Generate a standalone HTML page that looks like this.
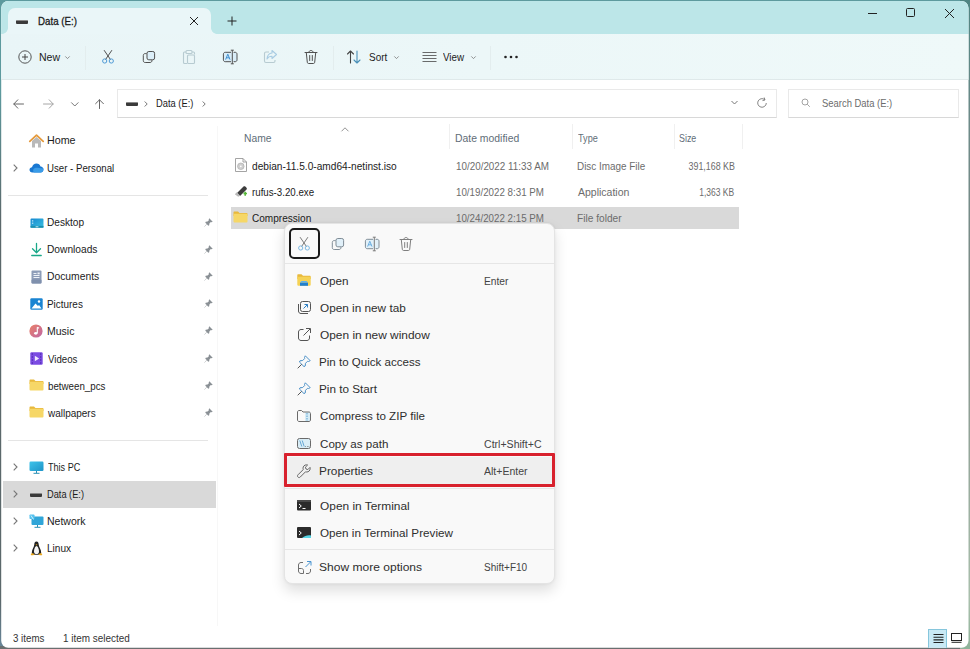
<!DOCTYPE html>
<html><head><meta charset="utf-8"><title>Data (E:)</title>
<style>
*{box-sizing:border-box;margin:0;padding:0}
html,body{width:970px;height:649px;overflow:hidden}
body{background:linear-gradient(180deg,#4f8583 0,#6d8a88 120px,#7f8c87 300px,#a9bfac 600px,#8fb39a 649px) right top/10px 100% no-repeat,linear-gradient(0deg,#6a6f70 0,#6a6f70 3px,transparent 3px) left bottom/100% 10px no-repeat,linear-gradient(180deg,#5d9a9e 0,#5d9a9e 90px,#5b686b 220px,#5b686b 600px,#68879b 649px)}
body{font-family:"Liberation Sans",sans-serif;font-size:10.5px;color:#1b1b1b;position:relative}
.a{position:absolute}
.t{position:absolute;white-space:nowrap;line-height:16px;height:16px}
svg{position:absolute;overflow:visible}
#win{left:0;top:0;width:970px;height:649px;background:#fff;overflow:hidden;clip-path:inset(1px 1.500px 1.300px 1.200px round 7px)}
#title{left:0;top:0;width:970px;height:34px;background:#bce6e8}
#tab{left:8px;top:8px;width:203px;height:26px;background:#eaf6f8;border-radius:7px 7px 0 0}
#tool{left:0;top:34px;width:970px;height:46px;background:linear-gradient(90deg,#e9f5f7,#eff9f9);border-bottom:1px solid #dfe9ea}
.vs{position:absolute;width:1px;background:#e3edee;top:46px;height:24px}
#addr{left:117px;top:89px;width:660px;height:29px;border:1px solid #e9e9e9;border-bottom-color:#d8d8d8;background:#fff}
#srch{left:788px;top:89px;width:171px;height:29px;border:1px solid #e9e9e9;border-bottom-color:#d8d8d8;background:#fff}
.nav .t{left:47px;margin-top:0.4px}
.hs{position:absolute;height:1px;background:#e5e5e5}
.g{color:#6c6c6c}
.m .t{font-size:11.5px;left:320px;color:#2e2e2e;margin-top:0.7px}
.m .k{left:484px!important;font-size:10px!important;color:#444!important}
</style></head><body>
<div id="win" class="a">
<div id="title" class="a"></div>
<div id="tab" class="a"></div>
<div id="tool" class="a"></div>
<div class="a" style="left:2px;top:28px;width:6px;height:6px;background:radial-gradient(circle at 0 0,rgba(234,246,248,0) 5.500px,#eaf6f8 6.200px)"></div>
<div class="a" style="left:211px;top:28px;width:6px;height:6px;background:radial-gradient(circle at 100% 0,rgba(234,246,248,0) 5.500px,#eaf6f8 6.200px)"></div>
<!-- frame border -->

<!-- tab contents -->
<div class="a" style="left:16px;top:20px;width:12px;height:4px;background:#3a3a3a;border-radius:1px;border-top:1px solid #8a8a8a"></div>
<div class="t" style="left:38.0px;top:13px;font-size:11px;-webkit-text-stroke:0.300px #1b1b1b;transform:scaleX(0.884);transform-origin:0 0">Data (E:)</div>
<svg style="left:189px;top:16px" width="10" height="10" viewBox="0 0 10 10"><path d="M1 1L9 9M9 1L1 9" stroke="#222" stroke-width="1" fill="none"/></svg>
<svg style="left:227px;top:16px" width="10" height="10" viewBox="0 0 10 10"><path d="M5 0.5V9.5M0.5 5H9.5" stroke="#222" stroke-width="1" fill="none"/></svg>
<!-- window controls -->
<svg style="left:867px;top:8px" width="100" height="12" viewBox="0 0 100 12"><path d="M1 5.5H10" stroke="#222" stroke-width="1" fill="none"/><rect x="39.500" y="0.500" width="8" height="8" rx="1" stroke="#222" fill="none"/><path d="M78 1L87 10M87 1L78 10" stroke="#222" stroke-width="1" fill="none"/></svg>

<!-- toolbar -->
<div class="vs" style="left:85px"></div><div class="vs" style="left:333px"></div><div class="vs" style="left:490px"></div>
<svg style="left:17px;top:49px" width="16" height="16" viewBox="0 0 16 16"><circle cx="8" cy="8" r="6.200" stroke="#444" stroke-width="0.900" fill="none"/><path d="M8 5V11M5 8H11" stroke="#444" stroke-width="1" fill="none"/></svg>
<div class="t" style="left:38.5px;top:49px;transform:scaleX(1.002);transform-origin:0 0">New</div>
<svg style="left:65px;top:55.500px" width="5" height="3" viewBox="0 0 5 3"><path d="M0.300 0.400L2.500 2.600L4.700 0.400" stroke="#777" stroke-width="0.800" fill="none"/></svg>
<!-- cut -->
<svg style="left:100px;top:49px" width="16" height="16" viewBox="0 0 16 16"><path d="M4.300 1.500L10.300 10.300M11.700 1.500L5.700 10.300" stroke="#505050" stroke-width="1" fill="none" stroke-linecap="round"/><circle cx="4.700" cy="12" r="2.100" stroke="#4f9ad6" stroke-width="1" fill="none"/><circle cx="11.300" cy="12" r="2.100" stroke="#4f9ad6" stroke-width="1" fill="none"/></svg>
<!-- copy -->
<svg style="left:140px;top:49px" width="16" height="16" viewBox="0 0 16 16"><path d="M6.700 4.600H5.200C4 4.600 3.300 5.300 3.300 6.500V11.600C3.300 12.800 4 13.500 5.200 13.500H10C11.200 13.500 11.900 12.800 11.900 11.600V11" stroke="#505050" stroke-width="1" fill="none"/><rect x="7" y="2.500" width="7.600" height="8.300" rx="1.800" stroke="#505050" stroke-width="1" fill="#dceff9"/></svg>
<!-- paste (disabled) -->
<svg style="left:181px;top:49px" width="16" height="16" viewBox="0 0 16 16" opacity="0.450"><path d="M5 3H3.500C2.900 3 2.500 3.400 2.500 4V13.500C2.500 14.100 2.900 14.500 3.500 14.500H6M11 3H12.500C13.100 3 13.500 3.400 13.500 4V5.500" stroke="#7a98a4" stroke-width="1.100" fill="none"/><rect x="5" y="1.500" width="6" height="3" rx="1" stroke="#7a98a4" stroke-width="1.100" fill="none"/><rect x="6.500" y="6" width="7" height="8.500" rx="1" stroke="#7a98a4" stroke-width="1.100" fill="none"/></svg>
<!-- rename -->
<svg style="left:220px;top:49px" width="18" height="16" viewBox="0 0 18 16"><rect x="3.400" y="3.300" width="13.600" height="9.400" rx="1.800" fill="#d9edf8"/><path d="M11 3.300H5.200C4.200 3.300 3.400 4.100 3.400 5.100V10.900C3.400 11.900 4.200 12.700 5.200 12.700H11M13.600 3.300H15.200C16.200 3.300 17 4.100 17 5.100V10.900C17 11.900 16.200 12.700 15.200 12.700H13.600" stroke="#505050" stroke-width="1" fill="none"/><path d="M10.800 1.200H13.800M12.300 1.200V14.800M10.800 14.800H13.800" stroke="#505050" stroke-width="1" fill="none"/><path d="M5.600 10.600L7.800 5.200L10 10.600M6.400 8.800H9.200" stroke="#3f8fd0" stroke-width="1" fill="none"/></svg>
<!-- share (disabled) -->
<svg style="left:262px;top:49px" width="16" height="16" viewBox="0 0 16 16" opacity="0.450"><path d="M7 3H4C3 3 2.500 3.600 2.500 4.500V12C2.500 13 3 13.500 4 13.500H11.500C12.500 13.500 13 13 13 12V11" stroke="#7a98a4" stroke-width="1.100" fill="none"/><path d="M10 1.500L14.500 5.500L10 9.500V7.200C7.500 7.200 6 8 5 10C5.300 6.500 7 4.300 10 4V1.500Z" stroke="#5a9acb" stroke-width="1.100" fill="none" stroke-linejoin="round"/></svg>
<!-- delete -->
<svg style="left:303px;top:49px" width="16" height="16" viewBox="0 0 16 16"><path d="M2 3.500H14M5.800 3.300C5.800 0.800 10.200 0.800 10.200 3.300M3.300 3.700L4.300 13.300C4.400 14.100 4.900 14.500 5.600 14.500H10.400C11.100 14.500 11.600 14.100 11.700 13.300L12.700 3.700M6.700 6.500V11.500M9.300 6.500V11.500" stroke="#505050" stroke-width="1" fill="none" stroke-linecap="round"/></svg>
<!-- sort -->
<svg style="left:346px;top:49px" width="16" height="16" viewBox="0 0 16 16"><path d="M4.500 14V2M1.500 5L4.500 2L7.500 5" stroke="#444" stroke-width="1.100" fill="none" stroke-linecap="round" stroke-linejoin="round"/><path d="M11 2V14M8 11L11 14L14 11" stroke="#4a90b8" stroke-width="1.100" fill="none" stroke-linecap="round" stroke-linejoin="round"/></svg>
<div class="t" style="left:368.5px;top:49px;transform:scaleX(0.948);transform-origin:0 0">Sort</div>
<svg style="left:394px;top:55.500px" width="5" height="3" viewBox="0 0 5 3"><path d="M0.300 0.400L2.500 2.600L4.700 0.400" stroke="#777" stroke-width="0.800" fill="none"/></svg>
<!-- view -->
<svg style="left:422px;top:51px" width="15" height="12" viewBox="0 0 15 12"><path d="M0.500 1.500H14.500M0.500 4.500H14.500M0.500 7.500H14.500M0.500 10.500H14.500" stroke="#5a5a5a" stroke-width="0.900" fill="none"/></svg>
<div class="t" style="left:443.0px;top:49px;transform:scaleX(0.935);transform-origin:0 0">View</div>
<svg style="left:471px;top:55.500px" width="5" height="3" viewBox="0 0 5 3"><path d="M0.300 0.400L2.500 2.600L4.700 0.400" stroke="#777" stroke-width="0.800" fill="none"/></svg>
<!-- more -->
<svg style="left:503px;top:55px" width="16" height="4" viewBox="0 0 16 4"><circle cx="2.500" cy="2" r="1.300" fill="#222"/><circle cx="8" cy="2" r="1.300" fill="#222"/><circle cx="13.500" cy="2" r="1.300" fill="#222"/></svg>

<!-- address row -->
<svg style="left:13px;top:99px" width="11" height="10" viewBox="0 0 11 10"><path d="M10.500 5H0.800M4.800 0.800L0.800 5L4.800 9.200" stroke="#666" stroke-width="1" fill="none" stroke-linecap="round" stroke-linejoin="round"/></svg>
<svg style="left:42.500px;top:99px" width="11" height="10" viewBox="0 0 11 10"><path d="M0.500 5H10.200M6.200 0.800L10.200 5L6.200 9.200" stroke="#a6a6a6" stroke-width="1" fill="none" stroke-linecap="round" stroke-linejoin="round"/></svg>
<svg style="left:70.500px;top:101.500px" width="8" height="5" viewBox="0 0 8 5"><path d="M0.500 0.700L3.800 4L7.100 0.700" stroke="#777" stroke-width="1" fill="none" stroke-linecap="round" stroke-linejoin="round"/></svg>
<svg style="left:94.500px;top:99px" width="9" height="10" viewBox="0 0 9 10"><path d="M4.500 9.500V0.800M0.600 4.700L4.500 0.800L8.400 4.700" stroke="#666" stroke-width="1" fill="none" stroke-linecap="round" stroke-linejoin="round"/></svg>
<div id="addr" class="a"></div>
<div class="a" style="left:126px;top:102px;width:12px;height:4px;background:#3a3a3a;border-radius:1px;border-top:1px solid #8a8a8a"></div>
<svg style="left:144px;top:101px" width="4" height="6" viewBox="0 0 4 6"><path d="M0.700 0.500L3.200 3L0.700 5.500" stroke="#666" stroke-width="0.900" fill="none"/></svg>
<div class="t" style="left:155.5px;top:95px;transform:scaleX(0.889);transform-origin:0 0">Data (E:)</div>
<svg style="left:201.500px;top:101px" width="4" height="6" viewBox="0 0 4 6"><path d="M0.700 0.500L3.200 3L0.700 5.500" stroke="#666" stroke-width="0.900" fill="none"/></svg>
<svg style="left:731px;top:100px" width="8" height="6" viewBox="0 0 8 6"><path d="M0.500 1L3.500 4L6.500 1" stroke="#777" stroke-width="1" fill="none"/></svg>
<svg style="left:756px;top:97px" width="12" height="12" viewBox="0 0 12 12"><path d="M10.300 6A4.300 4.300 0 1 1 8.700 2.600" stroke="#777" stroke-width="0.900" fill="none"/><path d="M8.200 0.500L9 3L6.500 3.600" stroke="#777" stroke-width="0.900" fill="none"/></svg>
<div id="srch" class="a"></div>
<svg style="left:801px;top:98px" width="10" height="10" viewBox="0 0 10 10"><circle cx="4" cy="4" r="3" stroke="#9a9a9a" stroke-width="0.900" fill="none"/><path d="M6.200 6.200L8.800 8.800" stroke="#9a9a9a" stroke-width="0.900" fill="none"/></svg>
<div class="t g" style="left:822.0px;top:95px;transform:scaleX(0.898);transform-origin:0 0">Search Data (E:)</div>
<!-- nav pane -->
<div class="nav">
<div class="a" style="left:3px;top:481px;width:212.500px;height:27px;background:#d9d9d9"></div>
<div class="a" style="left:217px;top:126px;width:1px;height:500px;background:#f7f7f7"></div>
<div class="hs" style="left:8px;top:195px;width:200px"></div><div class="hs" style="left:8px;top:440px;width:200px"></div>
<div class="t" style="top:132px;left:47.0px;transform:scaleX(1.019);transform-origin:0 0">Home</div>
<div class="t" style="top:160px;left:47.0px;transform:scaleX(0.921);transform-origin:0 0">User - Personal</div>
<div class="t" style="top:214px;left:47.1px;transform:scaleX(0.962);transform-origin:0 0">Desktop</div>
<div class="t" style="top:241px;left:46.5px;transform:scaleX(0.971);transform-origin:0 0">Downloads</div>
<div class="t" style="top:268px;left:46.5px;transform:scaleX(0.982);transform-origin:0 0">Documents</div>
<div class="t" style="top:295.7px;left:46.5px;transform:scaleX(0.945);transform-origin:0 0">Pictures</div>
<div class="t" style="top:322.6px;left:46.5px;transform:scaleX(1.001);transform-origin:0 0">Music</div>
<div class="t" style="top:350.5px;left:47.5px;transform:scaleX(0.921);transform-origin:0 0">Videos</div>
<div class="t" style="top:377.4px;left:47.5px;transform:scaleX(0.928);transform-origin:0 0">between_pcs</div>
<div class="t" style="top:404.5px;left:47.5px;transform:scaleX(0.950);transform-origin:0 0">wallpapers</div>
<div class="t" style="top:459px;left:48.0px;transform:scaleX(0.865);transform-origin:0 0">This PC</div>
<div class="t" style="top:486px;left:47.0px;transform:scaleX(0.880);transform-origin:0 0">Data (E:)</div>
<div class="t" style="top:513px;left:47.0px;transform:scaleX(1.001);transform-origin:0 0">Network</div>
<div class="t" style="top:540px;left:47.0px;transform:scaleX(0.958);transform-origin:0 0">Linux</div>
<svg style="left:13px;top:164px" width="5" height="8" viewBox="0 0 5 8"><path d="M0.700 0.700L4 4L0.700 7.300" stroke="#777" stroke-width="1.100" fill="none"/></svg>
<svg style="left:13px;top:463px" width="5" height="8" viewBox="0 0 5 8"><path d="M0.700 0.700L4 4L0.700 7.300" stroke="#777" stroke-width="1.100" fill="none"/></svg>
<svg style="left:13px;top:490px" width="5" height="8" viewBox="0 0 5 8"><path d="M0.700 0.700L4 4L0.700 7.300" stroke="#777" stroke-width="1.100" fill="none"/></svg>
<svg style="left:13px;top:517px" width="5" height="8" viewBox="0 0 5 8"><path d="M0.700 0.700L4 4L0.700 7.300" stroke="#777" stroke-width="1.100" fill="none"/></svg>
<svg style="left:13px;top:544px" width="5" height="8" viewBox="0 0 5 8"><path d="M0.700 0.700L4 4L0.700 7.300" stroke="#777" stroke-width="1.100" fill="none"/></svg>
<svg style="left:204px;top:218px" width="9" height="9" viewBox="0 0 9 9"><path d="M5.300 0.300L8.700 3.700L7.600 4.300L6.800 4.100L5.400 5.500L5.200 7.300L4.300 7.700L2.900 6.300L0.500 8.700L0.300 8.500L2.700 6.100L1.300 4.700L1.700 3.800L3.500 3.600L4.900 2.200L4.700 1.400Z" fill="#8a9095"/></svg>
<svg style="left:204px;top:245px" width="9" height="9" viewBox="0 0 9 9"><path d="M5.300 0.300L8.700 3.700L7.600 4.300L6.800 4.100L5.400 5.500L5.200 7.300L4.300 7.700L2.900 6.300L0.500 8.700L0.300 8.500L2.700 6.100L1.300 4.700L1.700 3.800L3.500 3.600L4.900 2.200L4.700 1.400Z" fill="#8a9095"/></svg>
<svg style="left:204px;top:272px" width="9" height="9" viewBox="0 0 9 9"><path d="M5.300 0.300L8.700 3.700L7.600 4.300L6.800 4.100L5.400 5.500L5.200 7.300L4.300 7.700L2.900 6.300L0.500 8.700L0.300 8.500L2.700 6.100L1.300 4.700L1.700 3.800L3.500 3.600L4.900 2.200L4.700 1.400Z" fill="#8a9095"/></svg>
<svg style="left:204px;top:299px" width="9" height="9" viewBox="0 0 9 9"><path d="M5.300 0.300L8.700 3.700L7.600 4.300L6.800 4.100L5.400 5.500L5.200 7.300L4.300 7.700L2.900 6.300L0.500 8.700L0.300 8.500L2.700 6.100L1.300 4.700L1.700 3.800L3.500 3.600L4.900 2.200L4.700 1.400Z" fill="#8a9095"/></svg>
<svg style="left:204px;top:326px" width="9" height="9" viewBox="0 0 9 9"><path d="M5.300 0.300L8.700 3.700L7.600 4.300L6.800 4.100L5.400 5.500L5.200 7.300L4.300 7.700L2.900 6.300L0.500 8.700L0.300 8.500L2.700 6.100L1.300 4.700L1.700 3.800L3.500 3.600L4.900 2.200L4.700 1.400Z" fill="#8a9095"/></svg>
<svg style="left:204px;top:354px" width="9" height="9" viewBox="0 0 9 9"><path d="M5.300 0.300L8.700 3.700L7.600 4.300L6.800 4.100L5.400 5.500L5.200 7.300L4.300 7.700L2.900 6.300L0.500 8.700L0.300 8.500L2.700 6.100L1.300 4.700L1.700 3.800L3.500 3.600L4.900 2.200L4.700 1.400Z" fill="#8a9095"/></svg>
<svg style="left:204px;top:381px" width="9" height="9" viewBox="0 0 9 9"><path d="M5.300 0.300L8.700 3.700L7.600 4.300L6.800 4.100L5.400 5.500L5.200 7.300L4.300 7.700L2.900 6.300L0.500 8.700L0.300 8.500L2.700 6.100L1.300 4.700L1.700 3.800L3.500 3.600L4.900 2.200L4.700 1.400Z" fill="#8a9095"/></svg>
<svg style="left:204px;top:408px" width="9" height="9" viewBox="0 0 9 9"><path d="M5.300 0.300L8.700 3.700L7.600 4.300L6.800 4.100L5.400 5.500L5.200 7.300L4.300 7.700L2.900 6.300L0.500 8.700L0.300 8.500L2.700 6.100L1.300 4.700L1.700 3.800L3.500 3.600L4.900 2.200L4.700 1.400Z" fill="#8a9095"/></svg>
<svg style="left:29px;top:134px" width="15" height="14" viewBox="0 0 15 14"><path d="M3 7V13.500H6V9.500H9V13.500H12V7L7.500 3Z" fill="#b9b9b9"/><path d="M0.800 7.300L7.500 1.200L14.200 7.300" stroke="#e59a3c" stroke-width="1.800" fill="none" stroke-linecap="round" stroke-linejoin="round"/></svg>
<svg style="left:29px;top:163px" width="15" height="10" viewBox="0 0 15 10"><path d="M3.500 9.500C1.500 9.500 0.500 8.300 0.500 6.800C0.500 5.300 1.700 4.300 3 4.300C3.500 2 5.300 0.500 7.500 0.500C9.500 0.500 11 1.700 11.500 3.500C13.300 3.600 14.500 4.900 14.500 6.500C14.500 8.200 13.200 9.500 11.500 9.500Z" fill="#1978d2"/><path d="M5 9.500C3.500 8 3.800 5.500 6 5C8 4.500 10 5.500 14.300 5.500C14.800 7.500 13.500 9.500 11.500 9.500Z" fill="#3a9ce8"/></svg>
<svg style="left:29.500px;top:217.800px" width="14" height="10.200" viewBox="0 0 15 11"><defs><linearGradient id="dg" x1="0" y1="0" x2="1" y2="1"><stop offset="0" stop-color="#1588d0"/><stop offset="1" stop-color="#3cc0e0"/></linearGradient></defs><rect x="0.500" y="0.500" width="14" height="10" rx="1" fill="url(#dg)"/><rect x="0.500" y="8.500" width="14" height="2" fill="#1c8fae"/><rect x="2" y="2.500" width="1.500" height="1.200" fill="#c8ecfa"/><rect x="2" y="5" width="1.500" height="1.200" fill="#c8ecfa"/><rect x="6" y="9" width="3" height="1" fill="#c8ecfa"/></svg>
<svg style="left:31px;top:243px" width="11" height="14" viewBox="0 0 11 14"><path d="M5.500 0.500V9.500M1.500 5.800L5.500 9.800L9.500 5.800" stroke="#1aa889" stroke-width="1.300" fill="none" stroke-linecap="round" stroke-linejoin="round"/><path d="M0.800 12.500H10.200" stroke="#1aa889" stroke-width="1.400" stroke-linecap="round"/></svg>
<svg style="left:31px;top:270px" width="11" height="14" viewBox="0 0 11 14"><rect x="0.500" y="0.500" width="10" height="13" rx="1" fill="#8e9db8"/><rect x="0.500" y="9.500" width="10" height="4" rx="1" fill="#7f90ad"/><path d="M2.500 3.500H5.500M2.500 5.500H8.500M2.500 7.500H8.500" stroke="#eef2f8" stroke-width="1.100"/><rect x="6.500" y="2.500" width="2.200" height="1.800" fill="#eef2f8"/></svg>
<svg style="left:30px;top:298px" width="13" height="12" viewBox="0 0 13 12"><rect x="0.300" y="0.300" width="12.400" height="11.400" rx="1.200" fill="#1a84d2"/><path d="M1.500 10.500L5.500 5.500L8 8L9 7L11.500 10.500Z" fill="#fff"/><circle cx="9" cy="3.500" r="1.200" fill="#fff"/></svg>
<svg style="left:29px;top:324px" width="14" height="14" viewBox="0 0 14 14"><defs><linearGradient id="mg" x1="0" y1="0" x2="1" y2="1"><stop offset="0" stop-color="#ea7f66"/><stop offset="1" stop-color="#bf68a5"/></linearGradient></defs><circle cx="7" cy="7" r="6.600" fill="url(#mg)"/><path d="M8.300 3.300V9" stroke="#fff" stroke-width="1.100"/><path d="M8.300 3.300L10 4.300" stroke="#fff" stroke-width="1.200"/><ellipse cx="6.800" cy="9.300" rx="1.700" ry="1.400" fill="#fff"/></svg>
<svg style="left:30px;top:352px" width="13" height="13" viewBox="0 0 13 13"><rect x="0.300" y="0.300" width="12.400" height="12.400" rx="1.200" fill="#7b4be2"/><path d="M4.800 3.800L9.200 6.500L4.800 9.200Z" fill="#f0e8ff"/><path d="M1.800 2H2.800M1.800 5H2.800M1.800 8H2.800M1.800 11H2.800M10.200 2H11.200M10.200 5H11.200M10.200 8H11.200M10.200 11H11.200" stroke="#4a28a8" stroke-width="1.300"/></svg>
<svg style="left:29px;top:379px" width="15" height="12" viewBox="0 0 15 12"><path d="M0.500 1.500C0.500 0.900 0.900 0.500 1.500 0.500H5L6.500 2H13.500C14.100 2 14.500 2.400 14.500 3V5H0.500Z" fill="#e8b93c"/><rect x="0.500" y="2.800" width="14" height="8.700" rx="1" fill="#f6d767"/></svg>
<svg style="left:29px;top:406px" width="15" height="12" viewBox="0 0 15 12"><path d="M0.500 1.500C0.500 0.900 0.900 0.500 1.500 0.500H5L6.500 2H13.500C14.100 2 14.500 2.400 14.500 3V5H0.500Z" fill="#e8b93c"/><rect x="0.500" y="2.800" width="14" height="8.700" rx="1" fill="#f6d767"/></svg>
<svg style="left:29px;top:461px" width="15" height="13" viewBox="0 0 15 13"><defs><linearGradient id="pg" x1="0" y1="0" x2="1" y2="1"><stop offset="0" stop-color="#3ec3ea"/><stop offset="1" stop-color="#1e94c8"/></linearGradient></defs><rect x="0.500" y="0.500" width="14" height="9.500" rx="1.200" fill="url(#pg)"/><path d="M7.500 10V12M4.500 12.300H10.500" stroke="#2a8fb5" stroke-width="1"/></svg>
<div class="a" style="left:30px;top:493px;width:12px;height:4px;background:#3a3a3a;border-radius:1px;border-top:1px solid #8a8a8a"></div>
<svg style="left:29px;top:514px" width="15" height="14" viewBox="0 0 15 14"><rect x="2.500" y="2.500" width="12" height="8.500" rx="1" fill="#2fa5d8"/><rect x="0.500" y="0.500" width="5" height="4.500" rx="0.800" fill="#56c2ee"/><path d="M2 1.500L4.500 5.500" stroke="#e8f7ff" stroke-width="0.800"/><path d="M8.500 11V13M5.500 13.300H11.500" stroke="#2a8fb5" stroke-width="1"/></svg>
<svg style="left:30px;top:541px" width="13" height="15" viewBox="0 0 13 15"><path d="M6.500 0.500C4.800 0.500 4.300 2 4.300 3.500C4.300 5.500 1.800 8.500 1.800 11.500C1.800 13 3 13.800 6.500 13.800C10 13.800 11.200 13 11.200 11.500C11.200 8.500 8.700 5.500 8.700 3.500C8.700 2 8.200 0.500 6.500 0.500Z" fill="#222"/><path d="M6.500 5C5.300 5 4 8 4 10.500C4 12.500 5 13 6.500 13C8 13 9 12.500 9 10.500C9 8 7.700 5 6.500 5Z" fill="#f4f4f4"/><path d="M0.800 13.500C0.800 12 3.500 12 4.500 13.300C4.500 14.500 0.800 14.800 0.800 13.500ZM12.200 13.500C12.200 12 9.500 12 8.500 13.300C8.500 14.500 12.200 14.800 12.200 13.500Z" fill="#e9a820"/><path d="M5.500 3.800L6.500 4.500L7.500 3.800L6.500 3.300Z" fill="#e9a820"/></svg>
</div>
<div class="t" style="left:12.5px;top:630px;color:#333;transform:scaleX(0.926);transform-origin:0 0">3 items</div><div class="t" style="left:63.3px;top:630px;color:#333;transform:scaleX(0.945);transform-origin:0 0">1 item selected</div>
<div class="a" style="left:928px;top:629px;width:19px;height:20px;background:#c9e9f5;border:1px solid #86c6dc"></div>
<svg style="left:933px;top:633px" width="11" height="11" viewBox="0 0 11 11"><path d="M0.500 1.500H10.500M0.500 4.200H10.500M0.500 6.900H10.500M0.500 9.500H10.500" stroke="#222" stroke-width="1.100"/></svg>
<svg style="left:951px;top:633px" width="11" height="10" viewBox="0 0 11 10"><rect x="0.500" y="0.500" width="10" height="7" stroke="#222" fill="none"/><path d="M0.500 9.300H10.500" stroke="#222" stroke-width="1"/></svg>
<!-- file list -->
<div class="a" style="left:231px;top:207px;width:508px;height:22px;background:#d9d9d9"></div>
<div class="a" style="left:449px;top:124px;width:1px;height:25px;background:#f0f0f0"></div>
<div class="a" style="left:572px;top:124px;width:1px;height:25px;background:#f0f0f0"></div>
<div class="a" style="left:674px;top:124px;width:1px;height:25px;background:#f0f0f0"></div>
<div class="a" style="left:742px;top:124px;width:1px;height:25px;background:#f0f0f0"></div>
<svg style="left:341px;top:127px" width="8" height="5" viewBox="0 0 8 5"><path d="M0.500 4.300L4 0.800L7.500 4.300" stroke="#888" stroke-width="0.900" fill="none"/></svg>
<div class="t" style="left:244.0px;top:130px;color:#616d78;transform:scaleX(0.982);transform-origin:0 0">Name</div>
<div class="t" style="left:455.0px;top:130px;color:#616d78;transform:scaleX(0.991);transform-origin:0 0">Date modified</div>
<div class="t" style="left:578.0px;top:130px;color:#616d78;transform:scaleX(0.870);transform-origin:0 0">Type</div>
<div class="t" style="left:679.0px;top:130px;color:#616d78;transform:scaleX(0.844);transform-origin:0 0">Size</div>
<div class="t" style="left:251.5px;top:157.5px;transform:scaleX(0.966);transform-origin:0 0">debian-11.5.0-amd64-netinst.iso</div><div class="t g" style="left:455.5px;top:157.5px;transform:scaleX(0.938);transform-origin:0 0">10/20/2022 11:33 AM</div><div class="t g" style="left:577.0px;top:157.5px;transform:scaleX(0.942);transform-origin:0 0">Disc Image File</div><div class="t g" style="right:235.5px;top:157.5px;transform:scaleX(0.845);transform-origin:100% 0">391,168 KB</div>
<div class="t" style="left:251.5px;top:184px;transform:scaleX(0.925);transform-origin:0 0">rufus-3.20.exe</div><div class="t g" style="left:455.5px;top:184px;transform:scaleX(0.930);transform-origin:0 0">10/19/2022 8:31 PM</div><div class="t g" style="left:578.0px;top:184px;transform:scaleX(1.000);transform-origin:0 0">Application</div><div class="t g" style="right:235.5px;top:184px;transform:scaleX(0.810);transform-origin:100% 0">1,363 KB</div>
<div class="t" style="left:251.5px;top:210px;transform:scaleX(0.958);transform-origin:0 0">Compression</div><div class="t g" style="left:455.5px;top:210px;transform:scaleX(0.930);transform-origin:0 0">10/24/2022 2:15 PM</div><div class="t g" style="left:577.0px;top:210px;transform:scaleX(0.967);transform-origin:0 0">File folder</div>
<svg style="left:235px;top:158px" width="12" height="14" viewBox="0 0 12 14"><path d="M0.500 0.500H8L11.500 4V13.500H0.500Z" fill="#fff" stroke="#9a9a9a" stroke-width="0.900"/><path d="M8 0.500V4H11.500" fill="none" stroke="#9a9a9a" stroke-width="0.900"/><circle cx="5.800" cy="8.300" r="3.300" fill="#cfcfcf" stroke="#a8a8a8" stroke-width="0.600"/><circle cx="5.800" cy="8.300" r="0.900" fill="#fff"/></svg>
<svg style="left:234px;top:185px" width="14" height="12" viewBox="0 0 14 12"><path d="M3 8L9.500 1.500C10 1 10.800 1 11.300 1.500L12.500 2.700C13 3.200 13 4 12.500 4.500L6 11Z" fill="#3d3d3d"/><path d="M0.800 9.300L2.800 7.300L6.200 10.700L4.200 11.800Z" fill="#b9b9b9"/><path d="M9.500 8.500H13M11.200 6.800V10.800" stroke="#58b83a" stroke-width="1.600"/></svg>
<svg style="left:233px;top:211px" width="15" height="12" viewBox="0 0 15 12"><path d="M0.500 1.500C0.500 0.900 0.900 0.500 1.500 0.500H5L6.500 2H13.500C14.100 2 14.500 2.400 14.500 3V5H0.500Z" fill="#e8b93c"/><rect x="0.500" y="2.800" width="14" height="8.700" rx="1" fill="#f6d767"/></svg>
<!-- context menu -->
<div class="m">
<div class="a" style="left:284px;top:223px;width:271px;height:361px;background:#f9f9f9;border-radius:8px;border:1px solid #e4e4e4;box-shadow:0 7px 14px rgba(0,0,0,0.13),0 0 3px rgba(0,0,0,0.06)"></div>
<div class="hs" style="left:285px;top:263px;width:269px;background:#e6e6e6"></div>
<div class="hs" style="left:285px;top:549px;width:269px;background:#e6e6e6"></div>
<div class="hs" style="left:285px;top:488px;width:269px;background:#e6e6e6"></div>
<div class="a" style="left:287px;top:457px;width:265px;height:27px;background:#efefef;border-radius:3px"></div>
<div class="a" style="left:284px;top:453.200px;width:271px;height:34.100px;border:3.300px solid #d8212d;border-radius:1px"></div>
<div class="a" style="left:289px;top:228px;width:31px;height:31px;border:2px solid #1a1a1a;border-radius:5px"></div>
<svg style="left:296px;top:235.5px" width="16" height="16" viewBox="0 0 16 16"><path d="M4.300 1.500L10.300 10.300M11.700 1.500L5.700 10.300" stroke="#7a7a7a" stroke-width="1" fill="none" stroke-linecap="round"/><circle cx="4.700" cy="12" r="2.100" stroke="#7db9e3" stroke-width="1" fill="none"/><circle cx="11.300" cy="12" r="2.100" stroke="#7db9e3" stroke-width="1" fill="none"/></svg>
<svg style="left:329px;top:235.5px" width="16" height="16" viewBox="0 0 16 16"><path d="M6.700 4.600H5.200C4 4.600 3.300 5.300 3.300 6.500V11.600C3.300 12.800 4 13.500 5.200 13.500H10C11.200 13.500 11.900 12.800 11.900 11.600V11" stroke="#7f8c96" stroke-width="1" fill="none"/><rect x="7" y="2.500" width="7.600" height="8.300" rx="1.800" stroke="#7f8c96" stroke-width="1" fill="#e1f0f9"/></svg>
<svg style="left:362px;top:236px" width="18" height="16" viewBox="0 0 18 16"><rect x="3.400" y="3.300" width="13.600" height="9.400" rx="1.800" fill="#e1f0f9"/><path d="M11 3.300H5.200C4.200 3.300 3.400 4.100 3.400 5.100V10.900C3.400 11.900 4.200 12.700 5.200 12.700H11M13.600 3.300H15.200C16.200 3.300 17 4.100 17 5.100V10.900C17 11.900 16.200 12.700 15.200 12.700H13.600" stroke="#7f8c96" stroke-width="1" fill="none"/><path d="M10.800 1.200H13.800M12.300 1.200V14.800M10.800 14.800H13.800" stroke="#7a7a7a" stroke-width="1" fill="none"/><path d="M5.600 10.600L7.800 5.200L10 10.600M6.400 8.800H9.200" stroke="#6aaee0" stroke-width="1" fill="none"/></svg>
<svg style="left:398px;top:236px" width="16" height="16" viewBox="0 0 16 16"><path d="M2 3.500H14M5.800 3.300C5.800 0.800 10.200 0.800 10.200 3.300M3.300 3.700L4.300 13.300C4.400 14.100 4.900 14.500 5.600 14.500H10.400C11.100 14.500 11.600 14.100 11.700 13.300L12.700 3.700M6.700 6.500V11.500M9.300 6.500V11.500" stroke="#7f7f7f" stroke-width="1" fill="none" stroke-linecap="round"/></svg>
<div class="t" style="top:272.1px;left:320.0px;transform:scaleX(1.017);transform-origin:0 0">Open</div><div class="t k" style="top:273.1px;left:480.5px;transform:scaleX(1.022);transform-origin:0 0">Enter</div>
<div class="t" style="top:299.0px;left:320.0px;transform:scaleX(1.024);transform-origin:0 0">Open in new tab</div>
<div class="t" style="top:326.1px;left:320.0px;transform:scaleX(1.034);transform-origin:0 0">Open in new window</div>
<div class="t" style="top:353.5px;left:319.0px;transform:scaleX(1.005);transform-origin:0 0">Pin to Quick access</div>
<div class="t" style="top:380.5px;left:319.0px;transform:scaleX(1.019);transform-origin:0 0">Pin to Start</div>
<div class="t" style="top:407.6px;left:320.0px;transform:scaleX(1.010);transform-origin:0 0">Compress to ZIP file</div>
<div class="t" style="top:435.0px;left:320.0px;transform:scaleX(1.009);transform-origin:0 0">Copy as path</div><div class="t k" style="top:436.0px;left:485.0px;transform:scaleX(1.056);transform-origin:0 0">Ctrl+Shift+C</div>
<div class="t" style="top:462.0px;left:319.0px;transform:scaleX(1.029);transform-origin:0 0">Properties</div><div class="t k" style="top:463.0px;left:485.0px;transform:scaleX(1.051);transform-origin:0 0">Alt+Enter</div>
<div class="t" style="top:497.0px;left:320.0px;transform:scaleX(1.035);transform-origin:0 0">Open in Terminal</div>
<div class="t" style="top:524.1px;left:320.0px;transform:scaleX(1.016);transform-origin:0 0">Open in Terminal Preview</div>
<div class="t" style="top:558.8px;left:319.0px;transform:scaleX(1.047);transform-origin:0 0">Show more options</div><div class="t k" style="top:559.8px;left:480.0px;transform:scaleX(1.002);transform-origin:0 0">Shift+F10</div>
<svg style="left:297px;top:274px" width="14" height="12" viewBox="0 0 14 12"><path d="M0.300 1.300C0.300 0.700 0.700 0.300 1.300 0.300H4.500L6 1.800H12.700C13.300 1.800 13.700 2.200 13.700 2.800V5H0.300Z" fill="#e8b93c"/><rect x="0.300" y="2.800" width="13.400" height="9" rx="1" fill="#f5d255"/><path d="M3 8.500H11V11.800H3Z" fill="#1f7fd0"/><path d="M3 8.500L4.500 7H9.500L11 8.500Z" fill="#5fb2ee"/></svg>
<svg style="left:298px;top:301px" width="13" height="13" viewBox="0 0 13 13"><rect x="2.500" y="0.500" width="10" height="10" rx="2" stroke="#555" stroke-width="1" fill="none"/><path d="M0.500 3V10C0.500 11.500 1.500 12.500 3 12.500H10" stroke="#555" stroke-width="1" fill="none"/><path d="M5.500 7.500L9.500 3.500M6.500 3.500H9.500V6.500" stroke="#2d7fc4" stroke-width="1" fill="none"/></svg>
<svg style="left:298px;top:328px" width="13" height="13" viewBox="0 0 13 13"><path d="M5.500 1.500H3C1.600 1.500 0.500 2.600 0.500 4V10C0.500 11.400 1.600 12.500 3 12.500H9C10.400 12.500 11.500 11.400 11.500 10V7.500" stroke="#555" stroke-width="1" fill="none"/><path d="M5.500 7.500L12 1M8 0.500H12.500V5" stroke="#555" stroke-width="1" fill="none"/></svg>
<svg style="left:297px;top:355px" width="14" height="14" viewBox="0 0 14 14"><path d="M8.300 0.800L13.200 5.700L11.500 6.500L10.500 6.300L8.500 8.300L8.200 11L7 11.600L2.400 7L3 5.800L5.700 5.500L7.700 3.500L7.500 2.500Z" stroke="#4a90c8" stroke-width="1" fill="none" stroke-linejoin="round"/><path d="M4.700 9.300L0.700 13.300" stroke="#555" stroke-width="1" fill="none"/></svg>
<svg style="left:297px;top:382px" width="14" height="14" viewBox="0 0 14 14"><path d="M8.300 0.800L13.200 5.700L11.500 6.500L10.500 6.300L8.500 8.300L8.200 11L7 11.600L2.400 7L3 5.800L5.700 5.500L7.700 3.500L7.500 2.500Z" stroke="#4a90c8" stroke-width="1" fill="none" stroke-linejoin="round"/><path d="M4.700 9.300L0.700 13.300" stroke="#555" stroke-width="1" fill="none"/></svg>
<svg style="left:297px;top:410px" width="14" height="12" viewBox="0 0 14 12"><path d="M8 2.200H12C12.800 2.200 13.300 2.700 13.300 3.500V10C13.300 10.800 12.800 11.300 12 11.300H8Z" fill="#d6ecf6"/><path d="M0.500 2C0.500 1.200 1.200 0.500 2 0.500H4.500L6 2H12C12.800 2 13.500 2.700 13.500 3.500V10C13.500 10.800 12.800 11.500 12 11.500H2C1.200 11.500 0.500 10.800 0.500 10Z" stroke="#6a6a6a" stroke-width="1" fill="none"/><path d="M10 3V11" stroke="#5aa0d0" stroke-width="1" stroke-dasharray="1.500 1" fill="none"/></svg>
<svg style="left:297px;top:438px" width="14" height="11" viewBox="0 0 14 11"><rect x="0.500" y="0.500" width="13" height="10" rx="2" stroke="#6a6a6a" stroke-width="1" fill="#d9edf6"/><path d="M2.800 2.500L4.800 8.500M5.200 2.500L7.200 8.500" stroke="#5aa0d0" stroke-width="0.900"/><path d="M8.200 8.500H8.800M10 8.500H10.600M11.600 8.500H12.200" stroke="#6a6a6a" stroke-width="1"/></svg>
<svg style="left:297px;top:464px" width="14" height="14" viewBox="0 0 14 14"><path d="M9.500 0.800C7.500 0.800 6 2.400 6 4.300C6 4.800 6.100 5.200 6.200 5.600L1 10.800C0.300 11.500 0.300 12.500 1 13.100C1.600 13.700 2.600 13.700 3.300 13L8.500 7.800C8.900 7.900 9.200 8 9.700 8C11.600 8 13.200 6.500 13.200 4.500C13.200 4.100 13.100 3.700 13 3.400L10.800 5.600L9 5L8.400 3.200L10.600 1C10.300 0.900 9.900 0.800 9.500 0.800Z" stroke="#666" stroke-width="1" fill="none" stroke-linejoin="round"/></svg>
<svg style="left:297px;top:500px" width="14" height="11" viewBox="0 0 14 11"><rect x="0" y="0" width="14" height="10.500" rx="1" fill="#2b2b2b"/><rect x="0" y="0" width="14" height="2" fill="#4a4a4a"/><path d="M2 4L4.300 6L2 8" stroke="#fff" stroke-width="1" fill="none"/><path d="M5.500 8.500H8.500" stroke="#fff" stroke-width="1"/></svg>
<svg style="left:297px;top:527px" width="14" height="12" viewBox="0 0 14 12"><rect x="0" y="0" width="14" height="11" rx="1" fill="#2b2b2b"/><path d="M5 11H14V8.500C10 8 8 9 5 11Z" fill="#58d6e6"/><path d="M2 4L4.300 6L2 8" stroke="#fff" stroke-width="1" fill="none"/></svg>
<svg style="left:297.500px;top:561px" width="14" height="13" viewBox="0 0 14 13"><path d="M5 1.500H3C1.600 1.500 0.500 2.600 0.500 4V10C0.500 11.400 1.600 12.500 3 12.500H5.500M8 12.500H10C11.400 12.500 12.500 11.400 12.500 10V8" stroke="#6e6e6e" stroke-width="1" fill="none"/><path d="M0.500 7.500H3.500C4.600 7.500 5.500 8.400 5.500 9.500V12.500" stroke="#6e6e6e" stroke-width="1" fill="none"/><path d="M7.500 6L12.500 1M9 0.500H13V4.500" stroke="#4a94d0" stroke-width="1" fill="none"/></svg>
</div>
</div>
</body></html>
